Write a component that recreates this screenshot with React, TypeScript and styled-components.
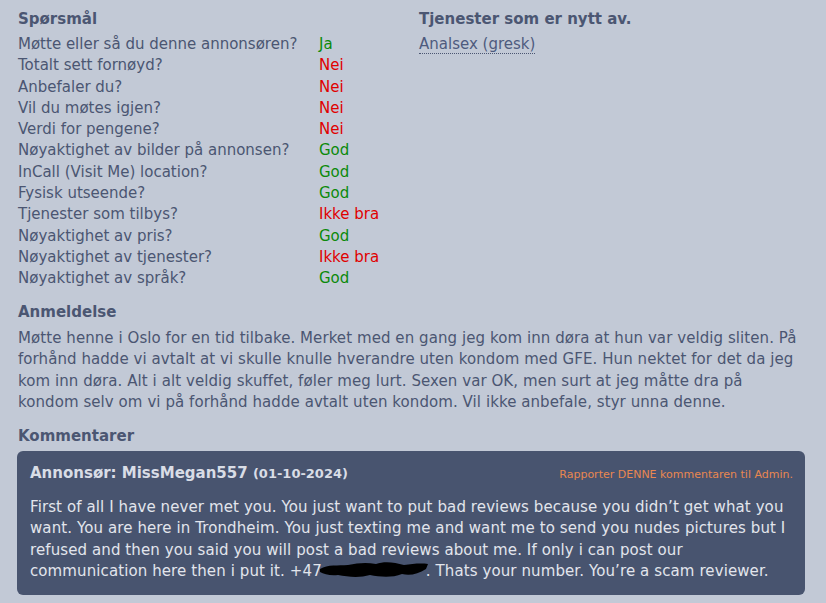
import styled, { createGlobalStyle } from 'styled-components'

const GlobalStyle = createGlobalStyle`
  html, body {
    margin: 0;
    padding: 0;
    background: #c2c9d6;
  }
  body {
    font-family: Verdana, "DejaVu Sans", sans-serif;
    color: #4b5672;
  }
`

const Page = styled.div`
  padding: 9px 21px 10px 18px;
  font-size: 15px;
`

const TopRow = styled.div`
  display: flex;
`

const Column = styled.div<{ $width?: number }>`
  width: ${({ $width }) => ($width ? `${$width}px` : 'auto')};
  flex-shrink: 0;
`

const Heading = styled.h3<{ $top?: number }>`
  margin: ${({ $top }) => $top ?? 0}px 0 4px;
  font-size: 15px;
  font-weight: 700;
  line-height: 21px;
  color: #4b5672;
`

const QuestionRow = styled.div`
  display: flex;
  line-height: 21.3px;
`

const Question = styled.span`
  width: 301px;
  flex-shrink: 0;
`

const Answer = styled.span<{ $good: boolean }>`
  color: ${({ $good }) => ($good ? '#0b8a0b' : '#e00000')};
`

const ServiceLink = styled.a`
  color: #4e5b7e;
  text-decoration: none;
  border-bottom: 1px dotted #4b5672;
  line-height: 21.3px;
`

const Review = styled.p`
  margin: 5px 0 0;
  line-height: 21.5px;
  letter-spacing: 0.07px;
`

const Card = styled.div`
  margin: 2px 0 0 -1px;
  background: #48546f;
  border-radius: 6px;
  padding: 12px 12px 12px 13px;
  color: #e2e5ec;
`

const CardHeader = styled.div`
  display: flex;
  justify-content: space-between;
  align-items: baseline;
  line-height: 21px;
`

const Author = styled.span`
  font-weight: 700;
  color: #d9dde6;
`

const DateText = styled.span`
  font-size: 13px;
`

const ReportLink = styled.a`
  font-size: 11px;
  color: #e9874f;
  text-decoration: none;
`

const CardBody = styled.p`
  margin: 12px 0 0;
  line-height: 21.5px;
  letter-spacing: 0.1px;
`

const Redacted = styled.span`
  position: relative;
  display: inline-block;
  width: 104px;
  height: 1em;
  vertical-align: -2px;
`

const Scribble = styled.svg`
  position: absolute;
  left: -4px;
  top: -3px;
  width: 112px;
  height: 20px;
`

const questions: [string, string, boolean][] = [
  ['Møtte eller så du denne annonsøren?', 'Ja', true],
  ['Totalt sett fornøyd?', 'Nei', false],
  ['Anbefaler du?', 'Nei', false],
  ['Vil du møtes igjen?', 'Nei', false],
  ['Verdi for pengene?', 'Nei', false],
  ['Nøyaktighet av bilder på annonsen?', 'God', true],
  ['InCall (Visit Me) location?', 'God', true],
  ['Fysisk utseende?', 'God', true],
  ['Tjenester som tilbys?', 'Ikke bra', false],
  ['Nøyaktighet av pris?', 'God', true],
  ['Nøyaktighet av tjenester?', 'Ikke bra', false],
  ['Nøyaktighet av språk?', 'God', true],
]

export default function App() {
  return (
    <>
      <GlobalStyle />
      <Page>
        <TopRow>
          <Column $width={401}>
            <Heading>Spørsmål</Heading>
            {questions.map(([q, a, good]) => (
              <QuestionRow key={q}>
                <Question>{q}</Question>
                <Answer $good={good}>{a}</Answer>
              </QuestionRow>
            ))}
          </Column>
          <Column>
            <Heading>Tjenester som er nytt av.</Heading>
            <ServiceLink href="#">Analsex (gresk)</ServiceLink>
          </Column>
        </TopRow>

        <Heading $top={12}>Anmeldelse</Heading>
        <Review>
          Møtte henne i Oslo for en tid tilbake. Merket med en gang jeg kom inn døra at hun var
          veldig sliten. På forhånd hadde vi avtalt at vi skulle knulle hverandre uten kondom med
          GFE. Hun nektet for det da jeg kom inn døra. Alt i alt veldig skuffet, føler meg lurt.
          Sexen var OK, men surt at jeg måtte dra på kondom selv om vi på forhånd hadde avtalt uten
          kondom. Vil ikke anbefale, styr unna denne.
        </Review>

        <Heading $top={12}>Kommentarer</Heading>
        <Card>
          <CardHeader>
            <Author>
              Annonsør: MissMegan557 <DateText>(01-10-2024)</DateText>
            </Author>
            <ReportLink href="#">Rapporter DENNE kommentaren til Admin.</ReportLink>
          </CardHeader>
          <CardBody>
            First of all I have never met you. You just want to put bad reviews because you didn’t
            get what you want. You are here in Trondheim. You just texting me and want me to send
            you nudes pictures but I refused and then you said you will post a bad reviews about
            me. If only i can post our communication here then i put it. +47
            <Redacted>
              <Scribble viewBox="0 0 112 20">
                <path
                  d="M2 9 C10 4 20 6 30 5 C40 3 48 2 58 4 C66 1 76 2 86 5 C94 4 102 3 110 4 L108 9 C100 14 92 16 84 14 C74 18 62 17 52 15 C42 18 30 17 20 15 C12 16 6 14 2 12 Z"
                  fill="#000"
                />
              </Scribble>
            </Redacted>
            . Thats your number. You’re a scam reviewer.
          </CardBody>
        </Card>
      </Page>
    </>
  )
}
